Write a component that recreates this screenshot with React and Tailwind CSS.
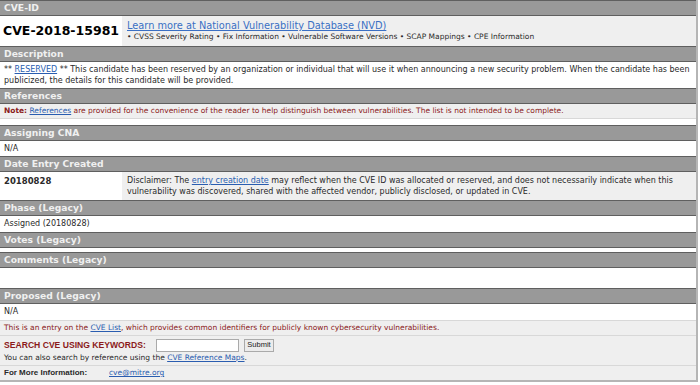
export default function App() {
    const font = { fontFamily: 'Verdana, "DejaVu Sans", sans-serif' };
    const narrow = { fontFamily: '"Liberation Sans", Arial, sans-serif' };
    const Head = ({ children }) => (
        <div className="h-[16px] bg-[#999999] border-y border-[#5f5f5f] px-[4px] flex items-center text-[9.2px] font-bold text-[#f0f0f0] leading-none">
            {children}
        </div>
    );
    const link = 'text-[#2a5db0] underline';

    return (
        <div className="w-[700px] h-[385px] bg-white overflow-hidden" style={font}>
            <div className="w-[698px] border-r-2 border-[#b5b5b5] text-[8px] text-[#2a2a2a] leading-[10px]">
                {/* CVE-ID */}
                <Head>CVE-ID</Head>
                <div className="flex h-[30px]">
                    <div className="w-[122px] bg-white flex items-center px-[3px] text-[12.5px] font-bold text-black whitespace-nowrap">CVE-2018-15981</div>
                    <div className="flex-1 bg-[#efefef] flex flex-col justify-center px-[5px]">
                        <a className={`${link} text-[9.8px] leading-[12px] text-[#3a6fc4]`}>Learn more at National Vulnerability Database (NVD)</a>
                        <div className="text-[7.5px] leading-[10px]">• CVSS Severity Rating • Fix Information • Vulnerable Software Versions • SCAP Mappings • CPE Information</div>
                    </div>
                </div>

                {/* Description */}
                <Head>Description</Head>
                <div className="h-[26px] px-[4px] pt-[2px] leading-[11px]">
                    ** <a className={link}>RESERVED</a> ** This candidate has been reserved by an organization or individual that will use it when announcing a new security problem. When the candidate has been publicized, the details for this candidate will be provided.
                </div>

                {/* References */}
                <Head>References</Head>
                <div className="h-[15px] bg-[#efefef] px-[4px] flex items-center text-[7.5px] text-[#8b1a1a] border-b border-[#d8d8d8]">
                    <span><b>Note:</b> <a className={link}>References</a> are provided for the convenience of the reader to help distinguish between vulnerabilities. The list is not intended to be complete.</span>
                </div>
                <div className="h-[6px]" />

                {/* Assigning CNA */}
                <Head>Assigning CNA</Head>
                <div className="h-[15px] px-[4px] flex items-center">N/A</div>

                {/* Date Entry Created */}
                <Head>Date Entry Created</Head>
                <div className="flex h-[28px]">
                    <div className="w-[122px] px-[4px] pt-[4px] font-bold text-[8.5px]">20180828</div>
                    <div className="flex-1 bg-[#efefef] px-[5px] pt-[3px] leading-[11px]">
                        Disclaimer: The <a className={link}>entry creation date</a> may reflect when the CVE ID was allocated or reserved, and does not necessarily indicate when this vulnerability was discovered, shared with the affected vendor, publicly disclosed, or updated in CVE.
                    </div>
                </div>

                {/* Legacy */}
                <Head>Phase (Legacy)</Head>
                <div className="h-[16px] px-[4px] flex items-center">Assigned (20180828)</div>
                <Head>Votes (Legacy)</Head>
                <div className="h-[4px]" />
                <Head>Comments (Legacy)</Head>
                <div className="h-[20px]" />
                <Head>Proposed (Legacy)</Head>
                <div className="h-[16px] px-[4px] flex items-center">N/A</div>

                {/* Footer */}
                <div className="h-[16px] bg-[#efefef] border-y border-[#d8d8d8] px-[4px] flex items-center text-[7.5px] text-[#8b1a1a]">
                    <span>This is an entry on the <a className={link}>CVE List</a>, which provides common identifiers for publicly known cybersecurity vulnerabilities.</span>
                </div>
                <div className="h-[30px] bg-[#efefef] border-b border-[#d8d8d8] px-[4px] flex flex-col justify-center text-[7.5px]">
                    <div className="flex items-center">
                        <span className="w-[152px] text-[8.6px] font-bold text-[#8b1a1a] whitespace-nowrap" style={narrow}>SEARCH CVE USING KEYWORDS:</span>
                        <div className="w-[83px] h-[13px] bg-white border border-[#aaa]" />
                        <button className="ml-[5px] h-[13px] w-[30px] bg-[#ececec] border border-[#aaa] text-[7.5px] leading-none text-[#222]" style={narrow}>Submit</button>
                    </div>
                    <div className="mt-[1px]">You can also search by reference using the <a className={link}>CVE Reference Maps</a>.</div>
                </div>
                <div className="h-[16px] bg-[#efefef] border-b-2 border-[#b5b5b5] px-[4px] flex items-center">
                    <b className="w-[105px] text-[8px] whitespace-nowrap" style={narrow}>For More Information:</b>
                    <a className={`${link} text-[7.5px]`}>cve@mitre.org</a>
                </div>
            </div>
        </div>
    );
}
